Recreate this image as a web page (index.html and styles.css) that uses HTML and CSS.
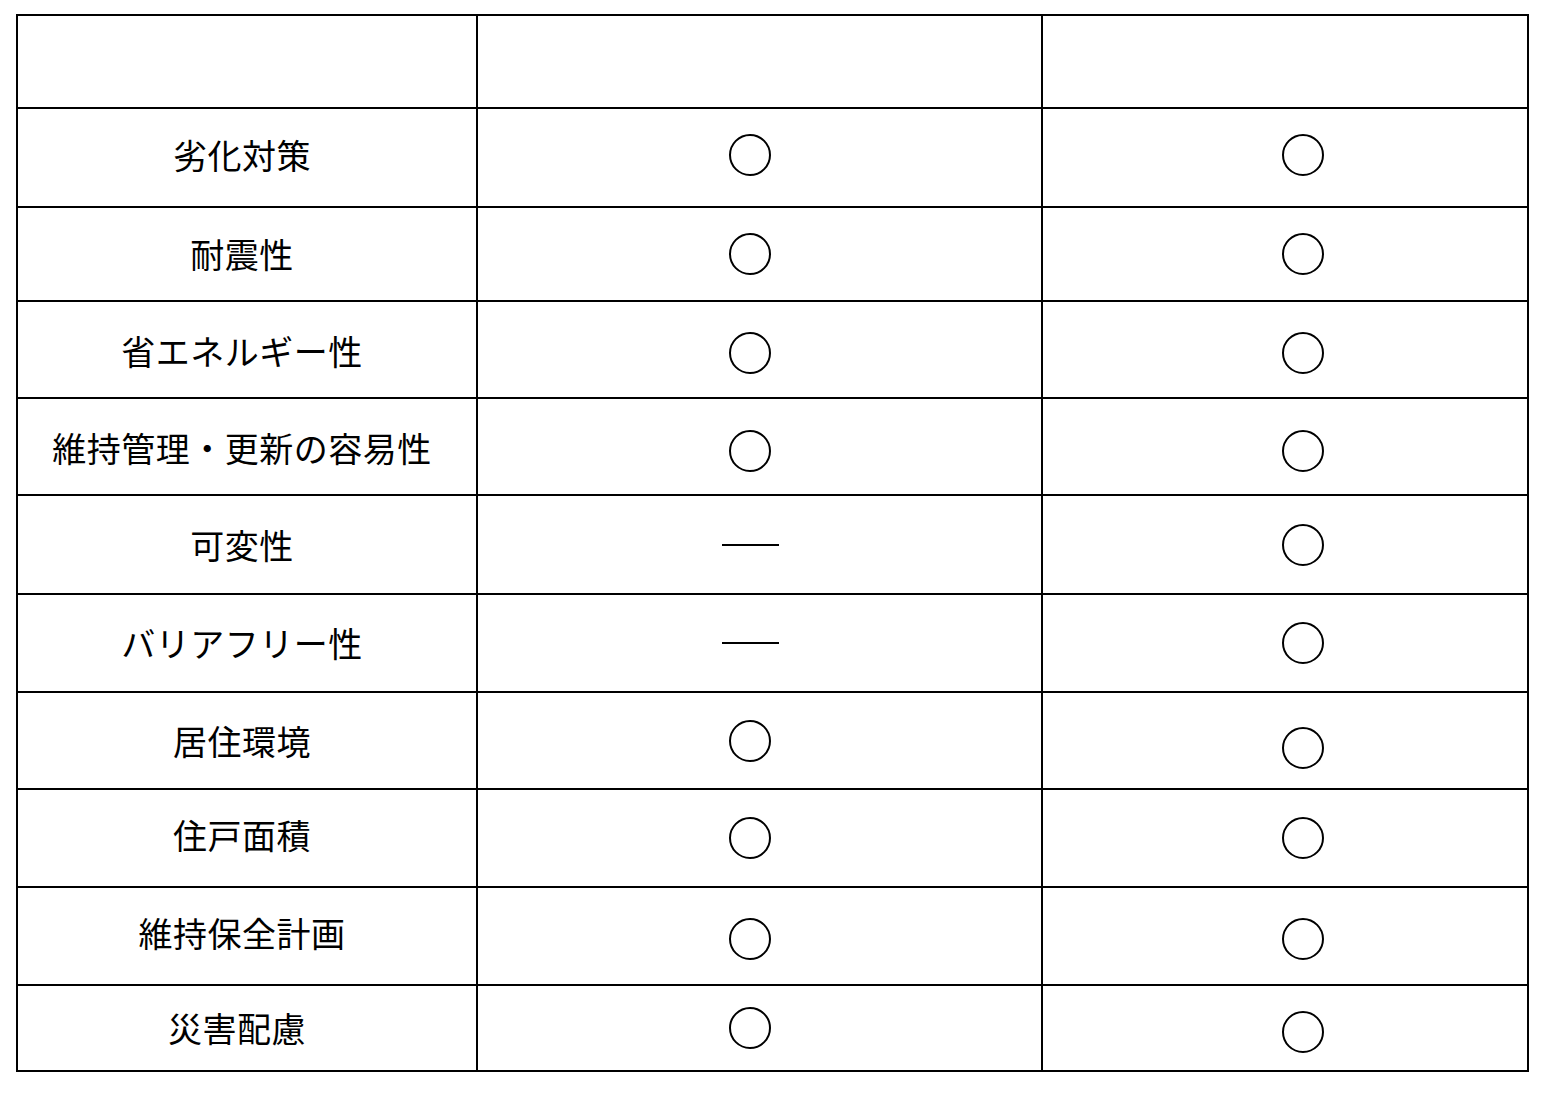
FILE: index.html
```html
<!DOCTYPE html>
<html lang="ja">
<head>
<meta charset="utf-8">
<title>性能比較表</title>
<link rel="stylesheet" href="styles.css">
</head>
<body>
<div class="table">
  <div class="cell head label"></div>
  <div class="cell head mid"></div>
  <div class="cell head right"></div>

  <div class="cell label up">劣化対策</div>
  <div class="cell mid up"><span class="circle"></span></div>
  <div class="cell right up"><span class="circle"></span></div>

  <div class="cell label">耐震性</div>
  <div class="cell mid"><span class="circle"></span></div>
  <div class="cell right"><span class="circle"></span></div>

  <div class="cell label down-xs">省エネルギー性</div>
  <div class="cell mid down-sm"><span class="circle"></span></div>
  <div class="cell right down-sm"><span class="circle"></span></div>

  <div class="cell label down-xs">維持管理・更新の容易性</div>
  <div class="cell mid down-md"><span class="circle"></span></div>
  <div class="cell right down-md"><span class="circle"></span></div>

  <div class="cell label">可変性</div>
  <div class="cell mid"><span class="dash"></span></div>
  <div class="cell right"><span class="circle"></span></div>

  <div class="cell label">バリアフリー性</div>
  <div class="cell mid"><span class="dash"></span></div>
  <div class="cell right"><span class="circle"></span></div>

  <div class="cell label">居住環境</div>
  <div class="cell mid"><span class="circle"></span></div>
  <div class="cell right down-lg"><span class="circle"></span></div>

  <div class="cell label up-lg">住戸面積</div>
  <div class="cell mid"><span class="circle"></span></div>
  <div class="cell right"><span class="circle"></span></div>

  <div class="cell label up-lg">維持保全計画</div>
  <div class="cell mid down-sm"><span class="circle"></span></div>
  <div class="cell right down-sm"><span class="circle"></span></div>

  <div class="cell label shift-left">災害配慮</div>
  <div class="cell mid"><span class="circle"></span></div>
  <div class="cell right down-md"><span class="circle"></span></div>
</div>
</body>
</html>
```

FILE: styles.css
```css
html, body {
  margin: 0;
  padding: 0;
  background: #ffffff;
}

body {
  padding: 14px 0 0 16px;
  font-family: "Noto Sans CJK JP", "Noto Sans", sans-serif;
  color: #000000;
}

.table {
  display: grid;
  grid-template-columns: 460px 565px 486px;
  grid-template-rows: 93px 99px 94px 97px 97px 99px 98px 97px 98px 98px 86px;
  width: max-content;
  border-top: 2px solid #000;
  border-left: 2px solid #000;
}

.cell {
  box-sizing: border-box;
  border-right: 2px solid #000;
  border-bottom: 2px solid #000;
  display: flex;
  align-items: center;
  justify-content: center;
}

.label {
  font-size: 34px;
  line-height: 1;
  letter-spacing: 0.5px;
  padding-right: 10px;
  white-space: nowrap;
}

.mid {
  padding-right: 19px;
}

.right {
  padding-left: 36px;
}

.up {
  padding-bottom: 6px;
}

.up-lg {
  padding-bottom: 7px;
}

.down-xs {
  padding-top: 2px;
}

.down-sm {
  padding-top: 6px;
}

.down-md {
  padding-top: 8px;
}

.down-lg {
  padding-top: 14px;
}

.label.shift-left {
  padding-right: 20px;
}

.head.mid, .head.right, .head.label {
  padding: 0;
}

.circle {
  display: block;
  width: 42px;
  height: 42px;
  box-sizing: border-box;
  border: 2px solid #000;
  border-radius: 50%;
}

.dash {
  display: block;
  width: 57px;
  height: 2px;
  background: #000;
}
```
